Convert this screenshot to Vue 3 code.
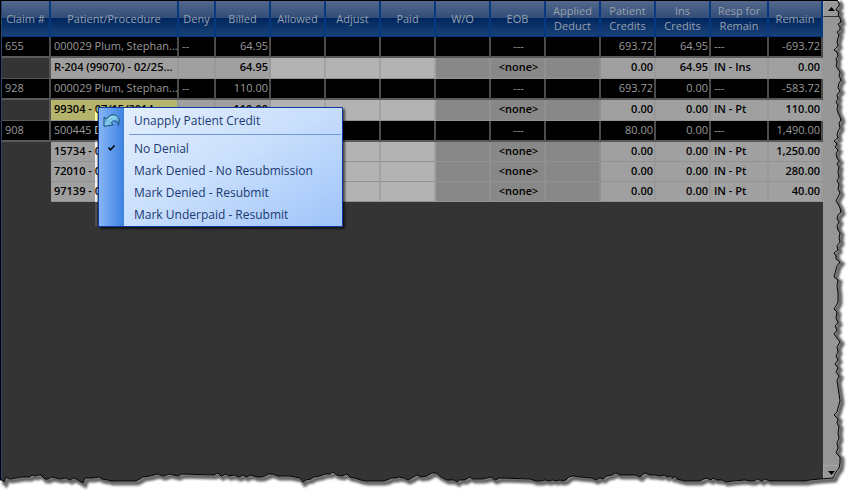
<script setup>
import { ref } from 'vue';

const columns = [
  { key: 'claim', label: 'Claim #', width: 49 },
  { key: 'patient', label: 'Patient/Procedure', width: 128 },
  { key: 'deny', label: 'Deny', width: 37 },
  { key: 'billed', label: 'Billed', width: 55, align: 'right' },
  { key: 'allowed', label: 'Allowed', width: 55, tone: 'edit' },
  { key: 'adjust', label: 'Adjust', width: 55, tone: 'edit' },
  { key: 'paid', label: 'Paid', width: 55, tone: 'edit' },
  { key: 'writeOff', label: 'W/O', width: 55, tone: 'locked' },
  { key: 'eob', label: 'EOB', width: 55, tone: 'locked', align: 'center' },
  { key: 'deduct', label: 'Applied Deduct', width: 55, tone: 'locked' },
  { key: 'patCredits', label: 'Patient Credits', width: 55, align: 'right' },
  { key: 'insCredits', label: 'Ins Credits', width: 55, align: 'right' },
  { key: 'resp', label: 'Resp for Remain', width: 58 },
  { key: 'remain', label: 'Remain', width: 54, align: 'right' },
];

const rows = [
  { head: true, claim: '655', patient: '000029 Plum, Stephan...', deny: '--', billed: '64.95', eob: '---', patCredits: '693.72', insCredits: '64.95', resp: '---', remain: '-693.72' },
  { patient: 'R-204 (99070) - 02/25...', billed: '64.95', eob: '<none>', patCredits: '0.00', insCredits: '64.95', resp: 'IN - Ins', remain: '0.00' },
  { head: true, claim: '928', patient: '000029 Plum, Stephan...', deny: '--', billed: '110.00', eob: '---', patCredits: '693.72', insCredits: '0.00', resp: '---', remain: '-583.72' },
  { selected: true, patient: '99304 - 07/15/2014', billed: '110.00', eob: '<none>', patCredits: '0.00', insCredits: '0.00', resp: 'IN - Pt', remain: '110.00' },
  { head: true, claim: '908', patient: 'S00445 D', eob: '---', patCredits: '80.00', insCredits: '0.00', resp: '---', remain: '1,490.00' },
  { short: true, patient: '15734 - 0', eob: '<none>', patCredits: '0.00', insCredits: '0.00', resp: 'IN - Pt', remain: '1,250.00' },
  { short: true, patient: '72010 - 0', eob: '<none>', patCredits: '0.00', insCredits: '0.00', resp: 'IN - Pt', remain: '280.00' },
  { short: true, patient: '97139 - 0', eob: '<none>', patCredits: '0.00', insCredits: '0.00', resp: 'IN - Pt', remain: '40.00' },
];

const denials = ['No Denial', 'Mark Denied - No Resubmission', 'Mark Denied - Resubmit', 'Mark Underpaid - Resubmit'];
const denial = ref('No Denial');

// torn paper edge: down the right side, then back along the bottom
const right = '837,0 839,3 839,6 837,8 836,10 839,12 838,15 840,18 841,22 838,24 840,27 840,30 837,32 839,35 838,38 837,42 838,46 834,50 837,52 838,56 836,59 837,62 836,66 838,69 840,72 839,76 841,80 839,83 838,88 840,91 837,95 838,99 836,102 838,105 837,109 838,113 840,117 841,120 839,123 840,128 838,131 837,135 838,138 834,141 837,144 835,147 838,150 836,154 837,158 839,161 837,164 839,167 838,172 839,177 837,181 839,184 838,189 840,193 838,197 836,201 838,204 840,208 841,212 838,215 837,219 839,222 837,226 838,230 840,233 839,238 840,242 837,246 838,250 834,253 836,256 836,259 840,262 837,266 834,277 838,280 837,286 838,293 838,302 836,306 834,309 837,312 836,318 838,323 835,326 837,330 834,334 837,338 840,342 837,347 838,352 836,356 838,360 835,364 838,368 836,372 839,376 837,381 838,387 839,394 840,401 838,408 837,412 834,415 838,419 837,423 839,427 838,433 839,438 837,443 838,448 836,453 840,457 840,463 839,468 836,472 834,476 833,478';
const bottom = '820,479 810,480 806,481 770,481 765,479 762,481 758,479 754,481 750,481 745,480 733,481 726,482 722,480 717,480 713,478 711,480 707,478 704,479 700,481 685,481 677,479 675,476 673,478 670,476 667,477 665,475 660,476 656,475 650,475 645,473 640,477 636,475 620,475 616,473 612,475 607,476 603,479 600,478 596,480 592,478 580,477 573,476 569,477 566,480 562,481 560,480 556,481 553,480 549,481 545,480 541,481 536,481 530,479 500,478 495,480 491,477 483,479 473,479 470,477 465,480 459,480 457,482 454,480 447,480 441,477 436,473 432,473 427,476 421,477 417,475 412,478 408,480 404,478 399,477 396,478 392,478 387,480 383,481 366,481 361,480 355,478 350,477 347,474 342,476 337,475 333,472 330,474 326,474 320,476 314,477 311,479 306,480 303,482 300,478 295,477 290,476 278,476 273,474 269,474 265,476 262,477 257,477 251,475 246,477 243,475 239,477 234,475 229,476 226,474 221,476 218,473 214,475 182,474 178,476 170,474 163,476 158,474 150,476 143,477 140,479 136,481 111,481 108,480 102,479 99,477 93,478 85,478 83,483 78,480 74,478 70,480 66,478 60,479 56,478 52,477 48,479 45,479 41,475 37,475 36,476 32,475 30,477 22,477 16,478 10,479 8,478 6,477 4,482 2,480 0,480';
const edge = `M${right} L${bottom}`;
const outside = `${edge} L0,490 L850,490 L850,0 Z`;
</script>

<template>
  <main class="page">
    <div class="panel">
      <div class="grid">
        <table>
          <colgroup>
            <col v-for="c in columns" :key="c.key" :style="{ width: c.width + 'px' }">
          </colgroup>
          <thead>
            <tr>
              <th v-for="c in columns" :key="c.key" scope="col">{{ c.label }}</th>
            </tr>
          </thead>
          <tbody>
            <tr v-for="(row, i) in rows" :key="i" :class="{ head: row.head, selected: row.selected, short: row.short }">
              <td v-for="c in columns" :key="c.key" :class="[c.key, c.tone, c.align]">{{ row[c.key] }}</td>
            </tr>
          </tbody>
        </table>
      </div>
      <div class="scrollbar">
        <button class="up" aria-label="Scroll up"><svg width="7" height="4" viewBox="0 0 7 4"><path d="M0 4 3.5 0 7 4z" /></svg></button>
        <button class="down" aria-label="Scroll down"><svg width="7" height="4" viewBox="0 0 7 4"><path d="M0 0 3.5 4 7 0z" /></svg></button>
      </div>
    </div>

    <div class="menu" role="menu">
      <button class="item" role="menuitem">
        <span class="icon">
          <svg width="17" height="13" viewBox="0 0 17 13">
            <defs>
              <linearGradient id="undo" x1="0" y1="0" x2="1" y2="1">
                <stop offset="0" stop-color="#2f8cbd" />
                <stop offset="0.5" stop-color="#86cfee" />
                <stop offset="1" stop-color="#2b7fb3" />
              </linearGradient>
            </defs>
            <path d="M1 3 3.500 5C5.500 1.800 8 .6 11 .8c4.500.5 6.500 5.200 4.300 10.700C15.200 8.500 13.500 6.800 11.500 6.800 10 6.800 9 7.500 8.300 8.500L10 11 1 12.300z" fill="url(#undo)" stroke="#1f5079" stroke-linejoin="round" />
            <path d="M4.500 6.200C6.500 3.200 8.500 2.300 11.500 2.600" fill="none" stroke="#c9ecfb" />
          </svg>
        </span>
        Unapply Patient Credit
      </button>
      <hr>
      <button v-for="d in denials" :key="d" class="item" role="menuitemradio" :aria-checked="d === denial" @click="denial = d">
        <span class="icon">
          <svg v-if="d === denial" width="9" height="8" viewBox="0 0 9 8"><path d="M1.500 3.500 3.500 5.800 7.500 1.500" fill="none" stroke="#000" stroke-width="1.5" /></svg>
        </span>
        {{ d }}
      </button>
    </div>

    <svg class="tear" viewBox="0 0 850 490" preserveAspectRatio="none" aria-hidden="true">
      <defs>
        <clipPath id="outside"><path :d="outside" /></clipPath>
        <filter id="soft" x="-5%" y="-5%" width="110%" height="110%"><feGaussianBlur stdDeviation="1" /></filter>
      </defs>
      <path :d="outside" fill="#fff" />
      <g clip-path="url(#outside)">
        <path :d="edge" class="shade" filter="url(#soft)" />
      </g>
      <path :d="edge" class="line" />
    </svg>
  </main>
</template>

<style>
body {
  margin: 0;
  background: #fff;
}
</style>

<style scoped>
.page {
  position: relative;
  box-sizing: border-box;
  height: 100vh;
  padding: 1px 10px 8px 1px;
  overflow: hidden;
  background: #000;
  font-family: "Open Sans", "Noto Sans", sans-serif;
  font-size: 11px;
}

.panel {
  display: flex;
  box-sizing: border-box;
  height: 100%;
  border-left: 1px solid #24466f;
  border-bottom: 1px solid #0b2f66;
  background: #343434;
}

.grid {
  flex: 1;
  min-width: 0;
}

table {
  width: 100%;
  table-layout: fixed;
  border-collapse: separate;
  border-spacing: 0;
}

th {
  box-sizing: border-box;
  height: 36px;
  padding: 0 2px 1px;
  border-right: 2px solid #053a80;
  border-bottom: 1px solid #003a86;
  background: linear-gradient(#53698c, #2f4b77 50%, #00265f 50%, #1b4278);
  color: #98a0ab;
  font-weight: 400;
  line-height: 15px;
}

td {
  box-sizing: border-box;
  height: 21px;
  padding: 0 1px 2px 3px;
  overflow: hidden;
  border-right: 2px solid #999;
  border-bottom: 1px solid #929292;
  background: #a0a0a0;
  color: #000;
  font-weight: 600;
  line-height: 16px;
  white-space: nowrap;
}

.short td {
  height: 20px;
}

td.claim {
  border-color: #555;
  background: #343434;
}

.short td.claim {
  border-color: #343434;
}

td.edit {
  border-right-color: #a2a2a2;
  background: #b3b3b3;
}

td.locked {
  border-right-color: #909090;
  background: #888;
}

.right {
  text-align: right;
}

.center {
  text-align: center;
}

.selected td.patient {
  background: #b5b46c;
}

.head td,
.head td.claim {
  border-right-color: #4b4b4b;
  border-bottom: 2px solid #5a5a5a;
  background: #000;
  color: #999;
  font-weight: 400;
}

.scrollbar {
  display: flex;
  flex-direction: column;
  justify-content: space-between;
  width: 17px;
  background: #969696;
}

.scrollbar button {
  display: flex;
  align-items: center;
  justify-content: center;
  height: 16px;
  padding: 0;
  border: 1px solid #a5a5a5;
  background: #989898;
}

.scrollbar .up {
  border-bottom-color: #333;
}

.menu {
  position: absolute;
  top: 107px;
  left: 98px;
  box-sizing: border-box;
  width: 245px;
  padding: 1px 0;
  border: 1px solid #1039a0;
  background:
    linear-gradient(90deg, #86b5f7, #3c82e0) left / 25px 100% no-repeat,
    linear-gradient(150deg, #e8f1fd, #c9dffc 50%, #9fc4fa);
  box-shadow: 2px 2px 2px rgba(0, 0, 0, 0.6);
  font-size: 12px;
}

/* bright sliver left of the menu */
.menu::before {
  position: absolute;
  top: 0;
  bottom: -1px;
  left: -4px;
  width: 3px;
  content: "";
  backdrop-filter: brightness(1.5);
}

.item {
  display: flex;
  align-items: center;
  gap: 10px;
  width: 100%;
  height: 22px;
  padding: 0;
  border: 0;
  background: none;
  color: #1b3a72;
  font: inherit;
  text-align: left;
  white-space: nowrap;
}

.icon {
  display: flex;
  justify-content: center;
  width: 25px;
}

hr {
  height: 1px;
  margin: 3px 1px 2px 30px;
  border: 0;
  background: #6d9ad6;
}

.tear {
  position: absolute;
  inset: 0;
  width: 100%;
  height: 100%;
  pointer-events: none;
}

.shade {
  fill: none;
  stroke: #666;
  stroke-width: 5px;
  transform: translate(2px, 2px);
}

.line {
  fill: none;
  stroke: #000;
}
</style>
